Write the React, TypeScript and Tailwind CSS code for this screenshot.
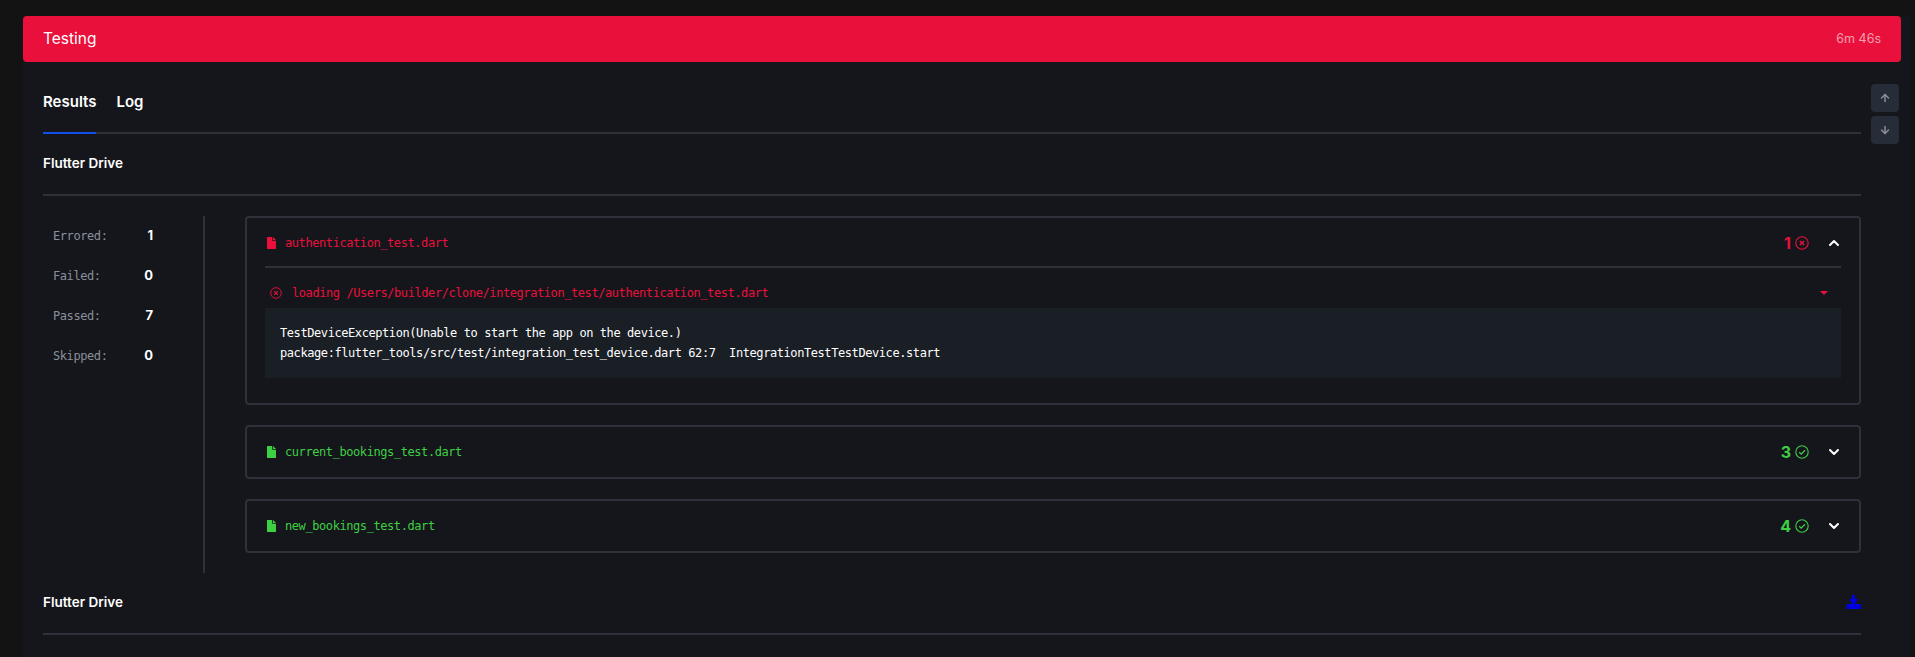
import { ArrowDown, ArrowUp, ChevronDown, ChevronUp } from 'lucide-react';

const stats = [
  { label: 'Errored:', value: 1 },
  { label: 'Failed:', value: 0 },
  { label: 'Passed:', value: 7 },
  { label: 'Skipped:', value: 0 },
];

function FileIcon({ className }: { className: string }) {
  return (
    <svg viewBox="0 0 9 12" className={`h-3 w-[9px] shrink-0 ${className}`} fill="currentColor">
      <path d="M0 0.5C0 0.2 0.2 0 0.5 0H5.2V3.2C5.2 3.5 5.5 3.8 5.8 3.8H9V11.5C9 11.8 8.8 12 8.5 12H0.5C0.2 12 0 11.8 0 11.5V0.5Z" />
      <path d="M6 0L9 3H6V0Z" />
    </svg>
  );
}

function ErrorIcon({ className }: { className: string }) {
  return (
    <svg viewBox="0 0 14 14" className={className} fill="none" stroke="currentColor" strokeWidth="1.1">
      <circle cx="7" cy="7" r="6.2" />
      <path d="M4.9 4.9L9.1 9.1M9.1 4.9L4.9 9.1" strokeWidth="1.4" />
    </svg>
  );
}

function PassIcon() {
  return (
    <svg viewBox="0 0 14 14" className="h-3.5 w-3.5" fill="none" stroke="currentColor" strokeWidth="1.1">
      <circle cx="7" cy="7" r="6.2" />
      <path d="M4.2 7.2L6.2 9.1L10 5.2" strokeWidth="1.3" />
    </svg>
  );
}

function PassedCard({ name, count }: { name: string; count: number }) {
  return (
    <div className="flex h-[54px] items-center rounded border-2 border-[#2f303b] pl-5 pr-[17px] text-[#3ecf43]">
      <FileIcon className="text-[#3ecf43]" />
      <span className="ml-[9px] font-['DejaVu_Sans_Mono',monospace] text-[12px] tracking-[-0.42px]">{name}</span>
      <span className="ml-auto font-['Inter',sans-serif] text-base font-bold">{count}</span>
      <span className="ml-1"><PassIcon /></span>
      <ChevronDown className="ml-[17px] h-4 w-4 text-white" strokeWidth={3} />
    </div>
  );
}

export default function App() {
  return (
    <div className="h-[657px] overflow-hidden bg-[#131313] pl-[23px] pr-[5px] pt-4 font-['Inter',sans-serif]">
      <div className="relative h-full bg-[#15161b]">
        <div className="mr-[9px] flex h-[46px] items-center justify-between rounded bg-[#e9103b] pl-5 pr-5 text-white">
          <span className="text-[15.5px]">Testing</span>
          <span className="text-[12.5px] text-white/60">6m 46s</span>
        </div>

        <div className="absolute right-[11px] top-[68px] flex flex-col gap-1">
          <button className="flex h-7 w-7 items-center justify-center rounded bg-[#262c38] text-[#8a8f9b]">
            <ArrowUp className="h-3 w-3" strokeWidth={3} />
          </button>
          <button className="flex h-7 w-7 items-center justify-center rounded bg-[#262c38] text-[#8a8f9b]">
            <ArrowDown className="h-3 w-3" strokeWidth={3} />
          </button>
        </div>

        <div className="pl-5 pr-[49px]">
          <div className="flex h-[72px] gap-5 border-b-2 border-[#2f303b] text-[15px] font-semibold text-white">
            <div className="-mb-[2px] flex h-[72px] items-center border-b-2 border-[#0f4fe8] pt-[10px]">Results</div>
            <div className="flex h-[70px] items-center pt-[10px]">Log</div>
          </div>

          <div className="h-[62px] border-b-2 border-[#2f303b] pt-[19px] text-[13.5px] leading-5 font-semibold text-white">
            Flutter Drive
          </div>

          <div className="flex pt-5">
            <div className="w-[162px] border-r-2 border-[#2f303b]">
              {stats.map((s) => (
                <div key={s.label} className="flex h-10 w-[110px] items-center justify-between pl-[10px]">
                  <span className="font-['DejaVu_Sans_Mono',monospace] text-[12px] tracking-[-0.42px] text-[#8a8f9b]">{s.label}</span>
                  <span className="font-['Inter',sans-serif] text-[13px] font-bold text-white">{s.value}</span>
                </div>
              ))}
            </div>

            <div className="ml-[40px] flex flex-1 flex-col gap-[20px] pb-5">
              <div className="rounded border-2 border-[#2f303b] px-[18px] pb-[25px]">
                <div className="flex h-[50px] items-center border-b-2 border-[#2f303b] pl-[2px] pt-[2px] text-[#e9103b]">
                  <FileIcon className="text-[#e9103b]" />
                  <span className="ml-[9px] font-['DejaVu_Sans_Mono',monospace] text-[12px] tracking-[-0.42px]">authentication_test.dart</span>
                  <span className="ml-auto font-['Inter',sans-serif] text-base font-bold">1</span>
                  <ErrorIcon className="ml-1 h-3.5 w-3.5" />
                  <ChevronUp className="-mr-px ml-[17px] h-4 w-4 text-white" strokeWidth={3} />
                </div>
                <div className="flex h-10 items-center pl-[5px] pr-[13px] pt-[10px] text-[#e9103b]">
                  <ErrorIcon className="h-3 w-3" />
                  <span className="ml-[10px] font-['DejaVu_Sans_Mono',monospace] text-[12px] tracking-[-0.42px]">
                    loading /Users/builder/clone/integration_test/authentication_test.dart
                  </span>
                  <svg viewBox="0 0 8 4" className="ml-auto h-1 w-2" fill="currentColor">
                    <path d="M0 0H8L4 4Z" />
                  </svg>
                </div>
                <div className="whitespace-pre bg-[#1a1e25] p-[15px] font-['DejaVu_Sans_Mono',monospace] text-[12px] leading-5 tracking-[-0.42px] text-white">
                  <div>TestDeviceException(Unable to start the app on the device.)</div>
                  <div>package:flutter_tools/src/test/integration_test_device.dart 62:7  IntegrationTestTestDevice.start</div>
                </div>
              </div>
              <PassedCard name="current_bookings_test.dart" count={3} />
              <PassedCard name="new_bookings_test.dart" count={4} />
            </div>
          </div>

          <div className="flex h-[62px] items-start justify-between border-b-2 border-[#2f303b] pt-[19px] text-[13.5px] leading-5 font-semibold text-white">
            <span>Flutter Drive</span>
            <svg viewBox="0 0 15 14" className="mt-[3px] h-[14px] w-[15px] text-[#0000e0]" fill="currentColor">
              <path d="M6 0H9V4H12L8.5 9H6.5L3 4H6V0Z" />
              <path d="M0.5 9H15V14H0.5V9Z" />
            </svg>
          </div>
        </div>
      </div>
    </div>
  );
}
